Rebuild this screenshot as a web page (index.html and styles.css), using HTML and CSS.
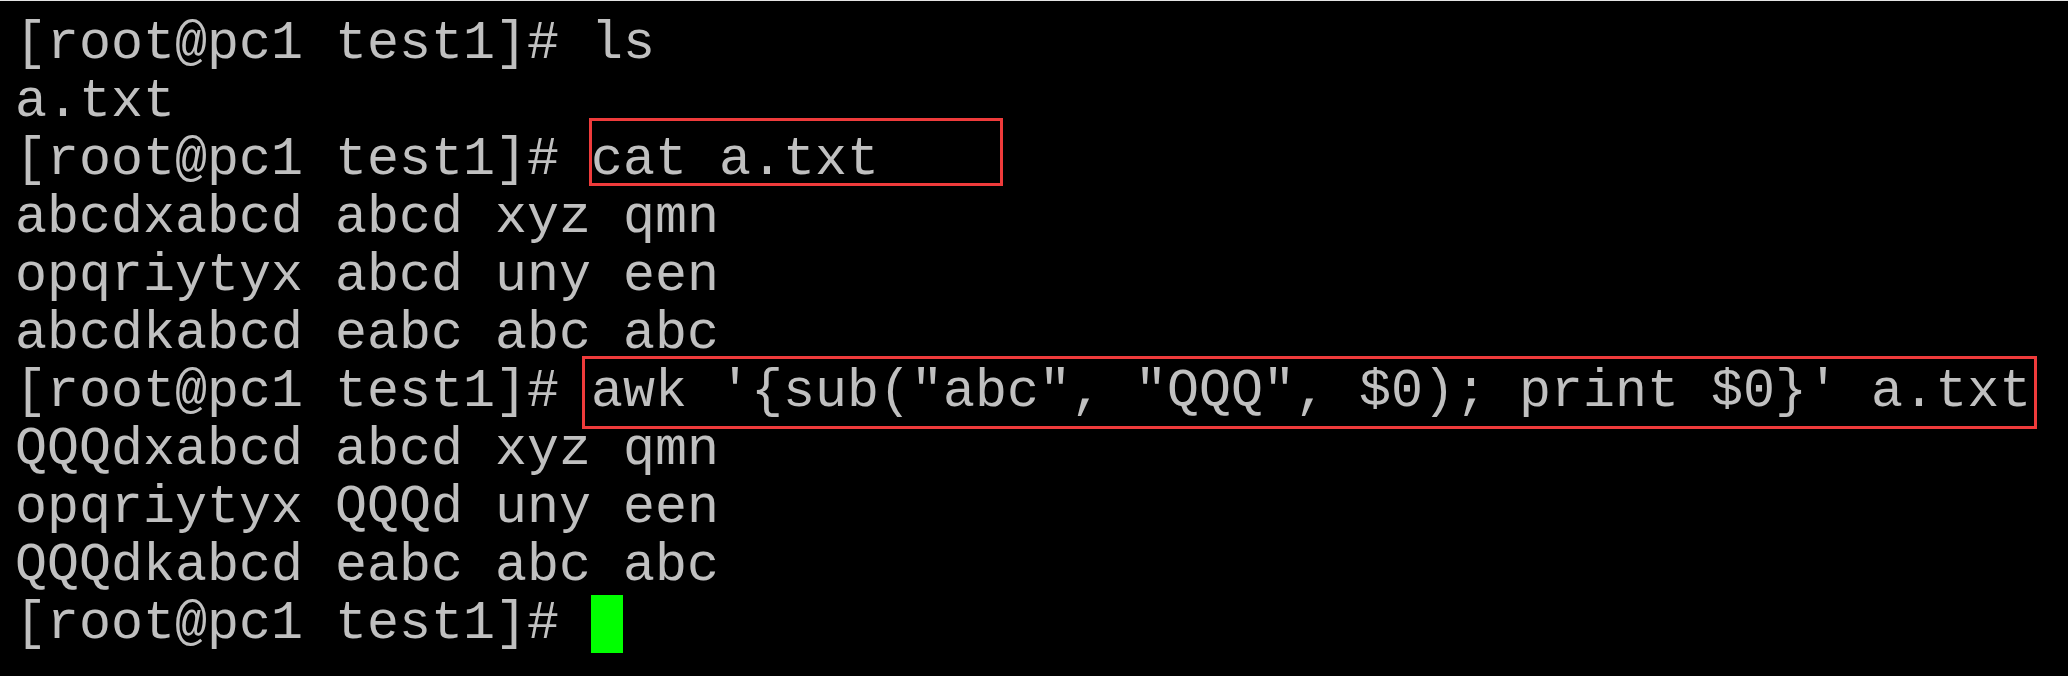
FILE: index.html
```html
<!DOCTYPE html>
<html>
<head>
<meta charset="utf-8">
<link rel="stylesheet" href="styles.css">
</head>
<body>
<div class="term">
  <div class="line">[root@pc1 test1]# ls</div>
  <div class="line">a.txt</div>
  <div class="line">[root@pc1 test1]# cat a.txt</div>
  <div class="line">abcdxabcd abcd xyz qmn</div>
  <div class="line">opqriytyx abcd uny een</div>
  <div class="line">abcdkabcd eabc abc abc</div>
  <div class="line">[root@pc1 test1]# awk '{sub("abc", "QQQ", $0); print $0}' a.txt</div>
  <div class="line">QQQdxabcd abcd xyz qmn</div>
  <div class="line">opqriytyx QQQd uny een</div>
  <div class="line">QQQdkabcd eabc abc abc</div>
  <div class="line">[root@pc1 test1]# <span class="cursor"></span></div>
  <div class="mark mark-cat"></div>
  <div class="mark mark-awk"></div>
</div>
</body>
</html>
```

FILE: styles.css
```css
html, body {
  margin: 0;
  padding: 0;
  background: #000;
}
.term {
  position: relative;
  box-sizing: border-box;
  width: 2068px;
  height: 676px;
  background: #000;
  border-top: 1px solid #e4e4e4;
  padding: 14px 15px;
  color: #c0c0c0;
  font-family: "Courier New", "Liberation Mono", monospace;
  font-size: 53.33px;
  line-height: 58px;
}
.line {
  white-space: pre;
  height: 58px;
}
.cursor {
  display: inline-block;
  width: 32px;
  height: 58px;
  background: #00ff00;
  vertical-align: top;
}
.mark {
  position: absolute;
  box-sizing: border-box;
  border: 3px solid #ef3b3b;
}
.mark-cat {
  left: 589px;
  top: 117px;
  width: 414px;
  height: 68px;
}
.mark-awk {
  left: 582px;
  top: 355px;
  width: 1455px;
  height: 73px;
}
```
